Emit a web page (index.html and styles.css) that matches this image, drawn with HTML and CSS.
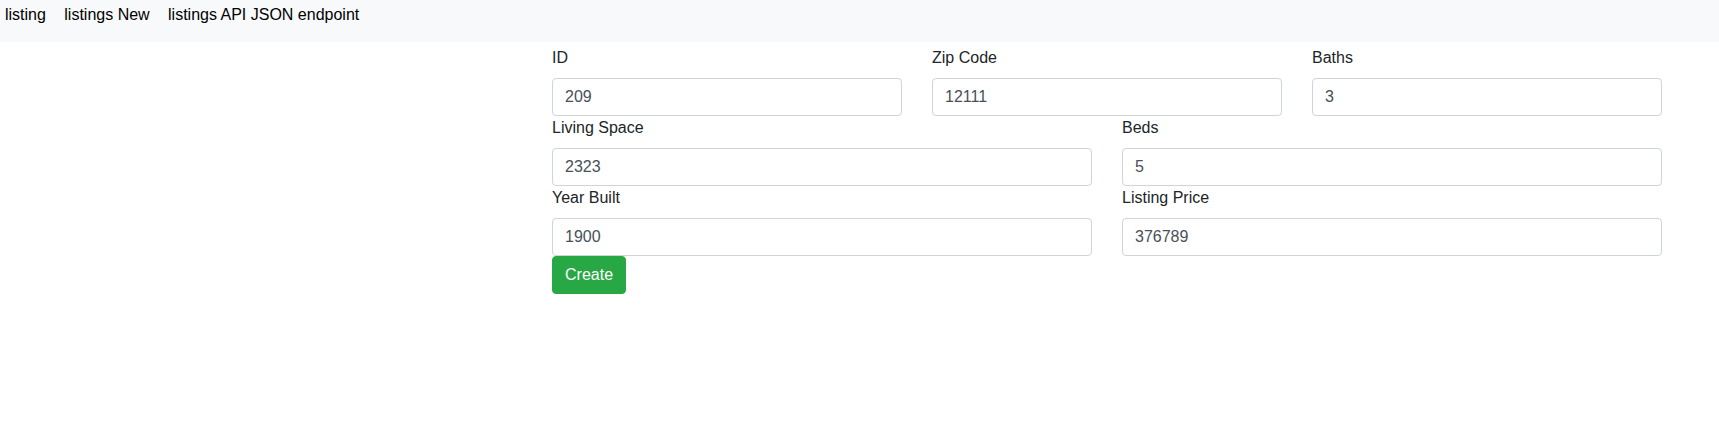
FILE: index.html
```html
<!DOCTYPE html>
<html lang="en">
<head>
<meta charset="utf-8">
<title>New listing</title>
<link rel="stylesheet" href="styles.css">
</head>
<body>
<nav class="topnav">
  <a class="nav-link" href="#">listing</a>
  <a class="nav-link" href="#">listings New</a>
  <a class="nav-link" href="#">listings API JSON endpoint</a>
</nav>
<main class="container">
  <form class="listing-form">
    <div class="form-row three">
      <div class="field">
        <label class="field-label">ID</label>
        <input class="field-input" type="text" value="209">
      </div>
      <div class="field">
        <label class="field-label">Zip Code</label>
        <input class="field-input" type="text" value="12111">
      </div>
      <div class="field">
        <label class="field-label">Baths</label>
        <input class="field-input" type="text" value="3">
      </div>
    </div>
    <div class="form-row two">
      <div class="field">
        <label class="field-label">Living Space</label>
        <input class="field-input" type="text" value="2323">
      </div>
      <div class="field">
        <label class="field-label">Beds</label>
        <input class="field-input" type="text" value="5">
      </div>
    </div>
    <div class="form-row two">
      <div class="field">
        <label class="field-label">Year Built</label>
        <input class="field-input" type="text" value="1900">
      </div>
      <div class="field">
        <label class="field-label">Listing Price</label>
        <input class="field-input" type="text" value="376789">
      </div>
    </div>
    <div class="actions">
      <button class="btn-create" type="submit">Create</button>
    </div>
  </form>
</main>
</body>
</html>
```

FILE: styles.css
```css
* { box-sizing: border-box; }

html, body {
  margin: 0;
  padding: 0;
  background: #ffffff;
  font-family: "Liberation Sans", Arial, sans-serif;
  font-size: 16px;
  line-height: 24px;
  color: #212529;
}

.topnav {
  display: flex;
  gap: 18.4px;
  height: 42px;
  padding: 3px 0 0 5px;
  background: #f8f9fa;
}

.nav-link {
  color: #000000;
  text-decoration: none;
  line-height: 24px;
}

.container {
  width: 1110px;
  margin: 4px 0 0 552px;
}

.form-row {
  display: grid;
  column-gap: 30px;
}

.form-row.three { grid-template-columns: repeat(3, 1fr); }
.form-row.two { grid-template-columns: repeat(2, 1fr); }

.field-label {
  display: block;
  margin-bottom: 8px;
  line-height: 24px;
  color: #212529;
}

.field-input {
  display: block;
  width: 100%;
  height: 38px;
  padding: 6px 12px;
  border: 1px solid #ced4da;
  border-radius: 4px;
  font-family: "Liberation Sans", Arial, sans-serif;
  font-size: 16px;
  line-height: 24px;
  color: #495057;
  background: #ffffff;
}

.actions {
  display: flex;
}

.btn-create {
  height: 38px;
  padding: 6px 12px;
  border: 1px solid #28a745;
  border-radius: 4px;
  background: #28a745;
  color: #ffffff;
  font-family: "Liberation Sans", Arial, sans-serif;
  font-size: 16px;
  line-height: 24px;
  cursor: pointer;
}
```
